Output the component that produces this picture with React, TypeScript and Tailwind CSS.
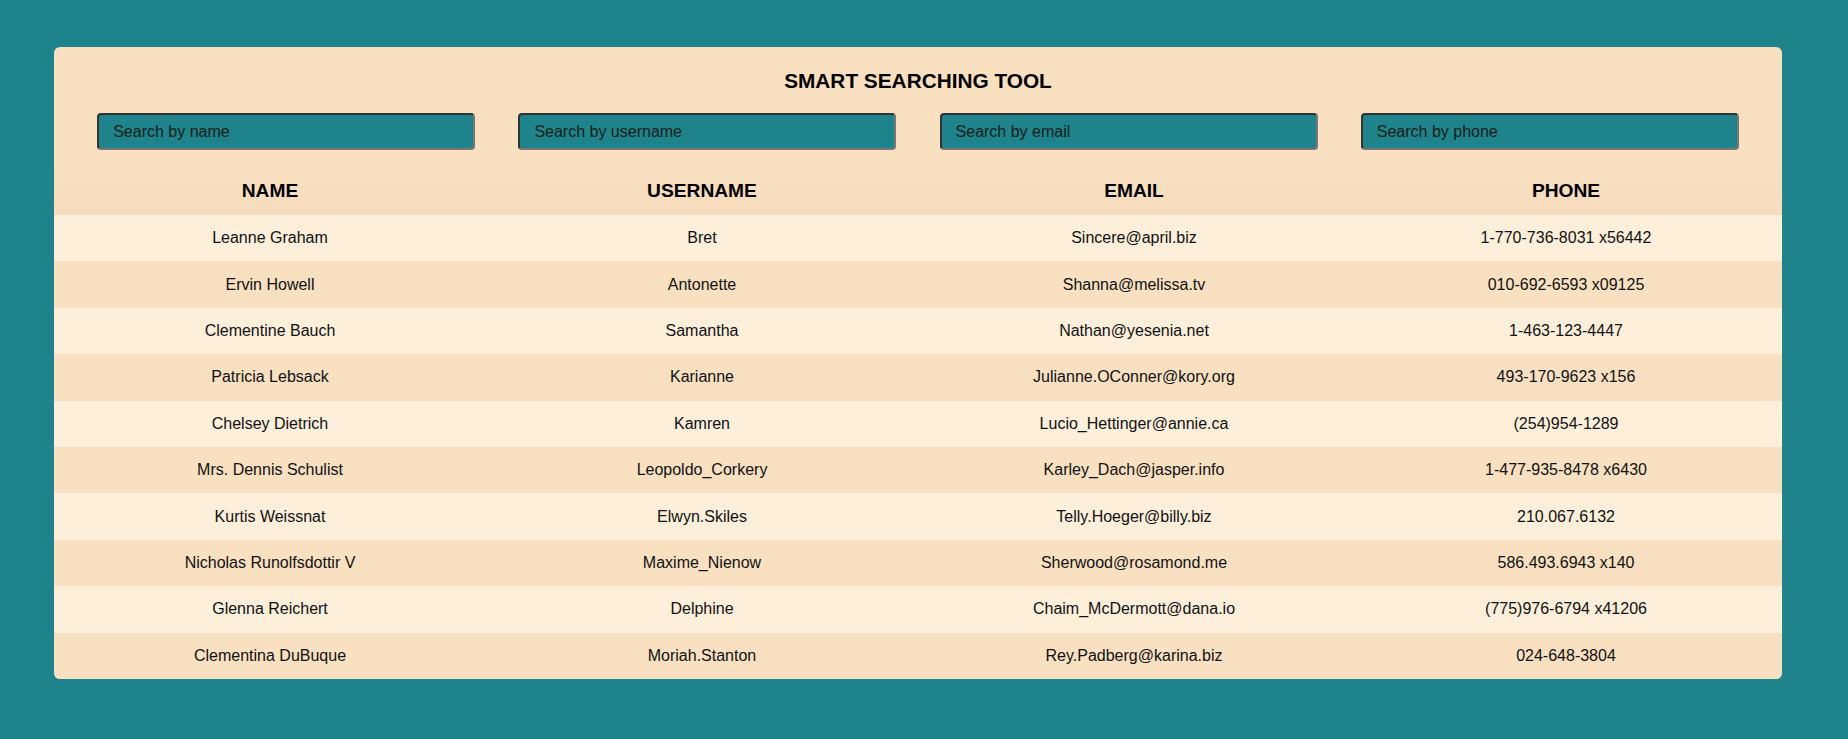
import React from "react";

const users = [
  ["Leanne Graham", "Bret", "Sincere@april.biz", "1-770-736-8031 x56442"],
  ["Ervin Howell", "Antonette", "Shanna@melissa.tv", "010-692-6593 x09125"],
  ["Clementine Bauch", "Samantha", "Nathan@yesenia.net", "1-463-123-4447"],
  ["Patricia Lebsack", "Karianne", "Julianne.OConner@kory.org", "493-170-9623 x156"],
  ["Chelsey Dietrich", "Kamren", "Lucio_Hettinger@annie.ca", "(254)954-1289"],
  ["Mrs. Dennis Schulist", "Leopoldo_Corkery", "Karley_Dach@jasper.info", "1-477-935-8478 x6430"],
  ["Kurtis Weissnat", "Elwyn.Skiles", "Telly.Hoeger@billy.biz", "210.067.6132"],
  ["Nicholas Runolfsdottir V", "Maxime_Nienow", "Sherwood@rosamond.me", "586.493.6943 x140"],
  ["Glenna Reichert", "Delphine", "Chaim_McDermott@dana.io", "(775)976-6794 x41206"],
  ["Clementina DuBuque", "Moriah.Stanton", "Rey.Padberg@karina.biz", "024-648-3804"],
];

const placeholders = ["Search by name", "Search by username", "Search by email", "Search by phone"];
const headers = ["NAME", "USERNAME", "EMAIL", "PHONE"];

export default function App() {
  return (
    <div
      className="min-h-[739px] w-full bg-[#1f838c] pt-[47px] pl-[54px]"
      style={{ fontFamily: '"Liberation Sans", Arial, sans-serif' }}
    >
      <div className="w-[1728px] rounded-[6px] bg-[#f8e0c1] overflow-hidden">
        <h2 className="pt-[22px] text-center text-[20.8px] leading-[24px] font-bold text-black">
          SMART SEARCHING TOOL
        </h2>
        <div className="mt-[20px] flex justify-evenly">
          {placeholders.map((p) => (
            <input
              key={p}
              type="text"
              placeholder={p}
              className="h-[37px] w-[378px] rounded-[4px] border-2 border-t-[#333333] border-l-[#333333] border-b-[#777777] border-r-[#777777] bg-[#1f838c] pl-[14px] text-[16px] text-[#111] outline-none placeholder:text-[#102018]"
            />
          ))}
        </div>
        <div className="mt-[17px] grid h-[48px] grid-cols-4 items-center bg-gradient-to-b from-[#f8e0c1] to-[#f6dcbd]">
          {headers.map((h) => (
            <div key={h} className="text-center text-[19.2px] font-bold text-black">
              {h}
            </div>
          ))}
        </div>
        {users.map((u, i) => (
          <div
            key={u[0]}
            className={`grid h-[46.4px] grid-cols-4 items-center text-[16px] text-[#111] ${
              i % 2 === 0 ? "bg-[#feefdb]" : "bg-[#f8e0c1]"
            }`}
          >
            {u.map((c, j) => (
              <div key={j} className="text-center">
                {c}
              </div>
            ))}
          </div>
        ))}
      </div>
    </div>
  );
}
